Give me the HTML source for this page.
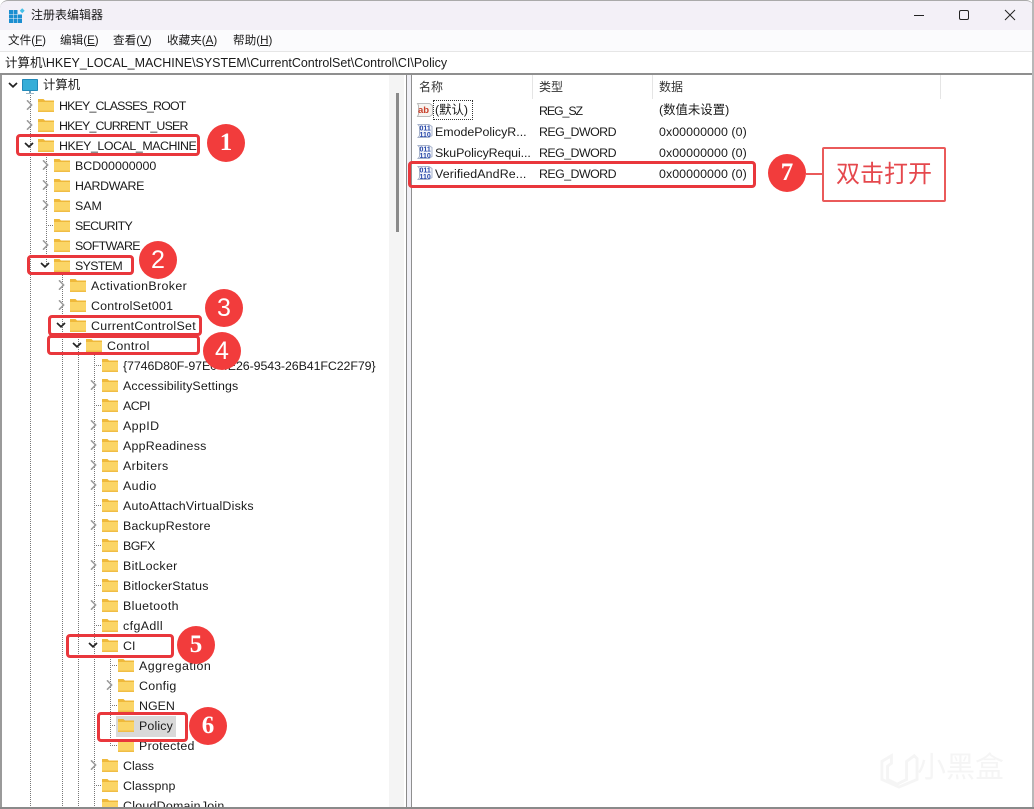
<!DOCTYPE html>
<html><head><meta charset="utf-8">
<style>
html,body{margin:0;padding:0;background:#fff}
#w{position:relative;width:1034px;height:809px;overflow:hidden;background:#fff;font-family:"Liberation Sans","Noto Sans CJK SC",sans-serif;font-size:12.4px;color:#1a1a1a}
#w div{position:absolute}
.t{white-space:nowrap;line-height:16px;height:16px;margin-top:1px}
.z{margin-top:0}
.m{margin-top:0;font-size:11.6px}
.l{background:repeating-linear-gradient(to bottom,#777 0 1px,transparent 1px 2px);width:1px}
.h{background:repeating-linear-gradient(to right,#777 0 1px,transparent 1px 2px);height:1px}
.b{border:3px solid #e9373c;border-radius:4px;box-sizing:border-box}
.c{width:38px;height:38px;border-radius:50%;background:#f23c3c;color:#fff;font:bold 25px/38px "Liberation Serif",serif;text-align:center}
.s{font:25px/38px "Liberation Sans",sans-serif}
svg{position:absolute;overflow:visible}
</style></head><body>
<div id="w">
<svg width="0" height="0" style="position:absolute"><defs>
<symbol id="f" viewBox="0 0 16 16"><path d="M0 2h5.5l1.5 1.5h9V15H0z" fill="#efb93a"/><path d="M0 5h16v10H0z" fill="#fbd566"/><path d="M0 13.5h16V15H0z" fill="#f0bd45"/></symbol>
<symbol id="o" viewBox="0 0 10 10"><path d="M3 .3l4.6 4.7L3 9.7" fill="none" stroke="#9c9c9c" stroke-width="1.6"/></symbol>
<symbol id="d" viewBox="0 0 10 10"><path d="M1 3l4 3.8L9 3" fill="none" stroke="#222" stroke-width="1.7"/></symbol>
<symbol id="n" viewBox="0 0 16 16"><path d="M1 1.5h11l3 2v9l-3 2H1l1.5-2v-9z" fill="#f4f6fb" stroke="#a9b4cc"/><text x="2.5" y="7.5" font-size="7" font-weight="bold" fill="#2747a8" font-family="Liberation Sans">011</text><text x="2.5" y="14" font-size="7" font-weight="bold" fill="#2747a8" font-family="Liberation Sans">110</text></symbol>
</defs></svg>

<!-- window chrome -->
<div style="left:0;top:0;width:1034px;height:30px;background:#f3f0f7;border-top:1px solid #aaa;box-sizing:border-box;border-radius:8px 8px 0 0"></div>
<div style="left:0;top:30px;width:1034px;height:21px;background:#fbfbfd"></div>
<div style="left:0;top:51px;width:1034px;height:1px;background:#e6e6e6"></div>
<div style="left:0;top:73px;width:1034px;height:2px;background:#8f8f8f"></div>
<div style="left:0;top:75px;width:2px;height:733px;background:#9a9a9a"></div>
<div style="left:1032px;top:0;width:2px;height:809px;background:#b8b8b8"></div>

<svg style="left:9px;top:8px" width="16" height="16" viewBox="0 0 16 16"><g fill="#1b8ed0"><rect x="0" y="2" width="4" height="4"/><rect x="4.5" y="2" width="4" height="4"/><rect x="0" y="6.5" width="4" height="4"/><rect x="4.5" y="6.5" width="4" height="4"/><rect x="9" y="6.5" width="4" height="4"/><rect x="0" y="11" width="4" height="4"/><rect x="4.5" y="11" width="4" height="4"/><rect x="9" y="11" width="4" height="4"/></g><rect x="11.5" y="1" width="3.5" height="3.5" fill="#45c0e8" transform="rotate(45 13.2 2.7)"/></svg>
<div class="t z" style="left:31px;top:7px;font-size:12px">注册表编辑器</div>

<svg style="left:912px;top:10px" width="110" height="12"><path d="M2 5.5h10" stroke="#222" stroke-width="1"/><rect x="47.5" y=".5" width="9" height="9" rx="1.5" fill="none" stroke="#222"/><path d="M93 0l10 10M103 0L93 10" stroke="#222"/></svg>

<div class="t m" style="left:8px;top:33px">文件(<u>F</u>)</div>
<div class="t m" style="left:60px;top:33px">编辑(<u>E</u>)</div>
<div class="t m" style="left:113px;top:33px">查看(<u>V</u>)</div>
<div class="t m" style="left:167px;top:33px">收藏夹(<u>A</u>)</div>
<div class="t m" style="left:233px;top:33px">帮助(<u>H</u>)</div>
<div class="t" style="left:5px;top:54px;font-size:12.47px">计算机\HKEY_LOCAL_MACHINE\SYSTEM\CurrentControlSet\Control\CI\Policy</div>

<!-- tree lines -->
<div class="l" style="left:30px;top:95px;height:712px"></div>
<div class="l" style="left:46px;top:155px;height:110px"></div>
<div class="l" style="left:62px;top:275px;height:532px"></div>
<div class="l" style="left:78px;top:335px;height:472px"></div>
<div class="l" style="left:94px;top:355px;height:452px"></div>
<div class="l" style="left:110px;top:655px;height:90px"></div>
<div class="h" style="left:94px;top:365px;width:8px"></div>
<div class="h" style="left:94px;top:405px;width:8px"></div>
<div class="h" style="left:94px;top:505px;width:8px"></div>
<div class="h" style="left:94px;top:545px;width:8px"></div>
<div class="h" style="left:94px;top:585px;width:8px"></div>
<div class="h" style="left:94px;top:625px;width:8px"></div>
<div class="h" style="left:94px;top:785px;width:8px"></div>
<div class="h" style="left:110px;top:665px;width:8px"></div>
<div class="h" style="left:110px;top:705px;width:8px"></div>
<div class="h" style="left:110px;top:725px;width:8px"></div>
<div class="h" style="left:110px;top:745px;width:8px"></div>
<div class="h" style="left:46px;top:225px;width:8px"></div>

<!-- computer row -->
<svg style="left:8px;top:80px" width="10" height="10"><use href="#d" width="10" height="10"/></svg>
<svg style="left:22px;top:79px" width="16" height="16" viewBox="0 0 16 16"><rect x="0" y="0" width="16" height="12" rx="1" fill="#35aed8"/><rect x=".4" y=".4" width="15.2" height="11.2" rx="1" fill="none" stroke="#1c7fb0" stroke-width=".8"/><rect x="7" y="12" width="2" height="2" fill="#6c9cb5"/><rect x="4" y="14" width="8" height="1" fill="#9cb8c8"/></svg>
<div class="t z" style="left:43px;top:77px">计算机</div>

<!-- tree rows -->
<svg style="left:24px;top:100px" width="10" height="10"><use href="#o" width="10" height="10"/></svg>
<svg style="left:38px;top:97px" width="16" height="16"><use href="#f" width="16" height="16"/></svg>
<div class="t" style="left:59px;top:97px;letter-spacing:-.82px">HKEY_CLASSES_ROOT</div>
<svg style="left:24px;top:120px" width="10" height="10"><use href="#o" width="10" height="10"/></svg>
<svg style="left:38px;top:117px" width="16" height="16"><use href="#f" width="16" height="16"/></svg>
<div class="t" style="left:59px;top:117px;letter-spacing:-.82px">HKEY_CURRENT_USER</div>
<svg style="left:24px;top:140px" width="10" height="10"><use href="#d" width="10" height="10"/></svg>
<svg style="left:38px;top:137px" width="16" height="16"><use href="#f" width="16" height="16"/></svg>
<div class="t" style="left:59px;top:137px;letter-spacing:-.44px">HKEY_LOCAL_MACHINE</div>

<svg style="left:40px;top:160px" width="10" height="10"><use href="#o" width="10" height="10"/></svg>
<svg style="left:54px;top:157px" width="16" height="16"><use href="#f" width="16" height="16"/></svg>
<div class="t" style="left:75px;top:157px">BCD00000000</div>
<svg style="left:40px;top:180px" width="10" height="10"><use href="#o" width="10" height="10"/></svg>
<svg style="left:54px;top:177px" width="16" height="16"><use href="#f" width="16" height="16"/></svg>
<div class="t" style="left:75px;top:177px;letter-spacing:-.35px">HARDWARE</div>
<svg style="left:40px;top:200px" width="10" height="10"><use href="#o" width="10" height="10"/></svg>
<svg style="left:54px;top:197px" width="16" height="16"><use href="#f" width="16" height="16"/></svg>
<div class="t" style="left:75px;top:197px">SAM</div>
<svg style="left:54px;top:217px" width="16" height="16"><use href="#f" width="16" height="16"/></svg>
<div class="t" style="left:75px;top:217px;letter-spacing:-.7px">SECURITY</div>
<svg style="left:40px;top:240px" width="10" height="10"><use href="#o" width="10" height="10"/></svg>
<svg style="left:54px;top:237px" width="16" height="16"><use href="#f" width="16" height="16"/></svg>
<div class="t" style="left:75px;top:237px;letter-spacing:-.6px">SOFTWARE</div>
<svg style="left:40px;top:260px" width="10" height="10"><use href="#d" width="10" height="10"/></svg>
<svg style="left:54px;top:257px" width="16" height="16"><use href="#f" width="16" height="16"/></svg>
<div class="t" style="left:75px;top:257px;letter-spacing:-.65px">SYSTEM</div>

<svg style="left:56px;top:280px" width="10" height="10"><use href="#o" width="10" height="10"/></svg>
<svg style="left:70px;top:277px" width="16" height="16"><use href="#f" width="16" height="16"/></svg>
<div class="t" style="left:91px;top:277px;letter-spacing:.37px">ActivationBroker</div>
<svg style="left:56px;top:300px" width="10" height="10"><use href="#o" width="10" height="10"/></svg>
<svg style="left:70px;top:297px" width="16" height="16"><use href="#f" width="16" height="16"/></svg>
<div class="t" style="left:91px;top:297px;letter-spacing:.23px">ControlSet001</div>
<svg style="left:56px;top:320px" width="10" height="10"><use href="#d" width="10" height="10"/></svg>
<svg style="left:70px;top:317px" width="16" height="16"><use href="#f" width="16" height="16"/></svg>
<div class="t" style="left:91px;top:317px;letter-spacing:.3px">CurrentControlSet</div>

<svg style="left:72px;top:340px" width="10" height="10"><use href="#d" width="10" height="10"/></svg>
<svg style="left:86px;top:337px" width="16" height="16"><use href="#f" width="16" height="16"/></svg>
<div class="t" style="left:107px;top:337px;letter-spacing:.4px">Control</div>

<svg style="left:102px;top:357px" width="16" height="16"><use href="#f" width="16" height="16"/></svg>
<div class="t" style="left:123px;top:357px;letter-spacing:-.08px">{7746D80F-97E0-4E26-9543-26B41FC22F79}</div>
<svg style="left:88px;top:380px" width="10" height="10"><use href="#o" width="10" height="10"/></svg>
<svg style="left:102px;top:377px" width="16" height="16"><use href="#f" width="16" height="16"/></svg>
<div class="t" style="left:123px;top:377px;letter-spacing:.15px">AccessibilitySettings</div>
<svg style="left:102px;top:397px" width="16" height="16"><use href="#f" width="16" height="16"/></svg>
<div class="t" style="left:123px;top:397px;letter-spacing:-.5px">ACPI</div>
<svg style="left:88px;top:420px" width="10" height="10"><use href="#o" width="10" height="10"/></svg>
<svg style="left:102px;top:417px" width="16" height="16"><use href="#f" width="16" height="16"/></svg>
<div class="t" style="left:123px;top:417px;letter-spacing:.4px">AppID</div>
<svg style="left:88px;top:440px" width="10" height="10"><use href="#o" width="10" height="10"/></svg>
<svg style="left:102px;top:437px" width="16" height="16"><use href="#f" width="16" height="16"/></svg>
<div class="t" style="left:123px;top:437px;letter-spacing:.25px">AppReadiness</div>
<svg style="left:88px;top:460px" width="10" height="10"><use href="#o" width="10" height="10"/></svg>
<svg style="left:102px;top:457px" width="16" height="16"><use href="#f" width="16" height="16"/></svg>
<div class="t" style="left:123px;top:457px;letter-spacing:.35px">Arbiters</div>
<svg style="left:88px;top:480px" width="10" height="10"><use href="#o" width="10" height="10"/></svg>
<svg style="left:102px;top:477px" width="16" height="16"><use href="#f" width="16" height="16"/></svg>
<div class="t" style="left:123px;top:477px;letter-spacing:.4px">Audio</div>
<svg style="left:102px;top:497px" width="16" height="16"><use href="#f" width="16" height="16"/></svg>
<div class="t" style="left:123px;top:497px;letter-spacing:.23px">AutoAttachVirtualDisks</div>
<svg style="left:88px;top:520px" width="10" height="10"><use href="#o" width="10" height="10"/></svg>
<svg style="left:102px;top:517px" width="16" height="16"><use href="#f" width="16" height="16"/></svg>
<div class="t" style="left:123px;top:517px;letter-spacing:.23px">BackupRestore</div>
<svg style="left:102px;top:537px" width="16" height="16"><use href="#f" width="16" height="16"/></svg>
<div class="t" style="left:123px;top:537px;letter-spacing:-.5px">BGFX</div>
<svg style="left:88px;top:560px" width="10" height="10"><use href="#o" width="10" height="10"/></svg>
<svg style="left:102px;top:557px" width="16" height="16"><use href="#f" width="16" height="16"/></svg>
<div class="t" style="left:123px;top:557px;letter-spacing:.33px">BitLocker</div>
<svg style="left:102px;top:577px" width="16" height="16"><use href="#f" width="16" height="16"/></svg>
<div class="t" style="left:123px;top:577px;letter-spacing:.2px">BitlockerStatus</div>
<svg style="left:88px;top:600px" width="10" height="10"><use href="#o" width="10" height="10"/></svg>
<svg style="left:102px;top:597px" width="16" height="16"><use href="#f" width="16" height="16"/></svg>
<div class="t" style="left:123px;top:597px;letter-spacing:.4px">Bluetooth</div>
<svg style="left:102px;top:617px" width="16" height="16"><use href="#f" width="16" height="16"/></svg>
<div class="t" style="left:123px;top:617px;letter-spacing:.4px">cfgAdll</div>
<svg style="left:88px;top:640px" width="10" height="10"><use href="#d" width="10" height="10"/></svg>
<svg style="left:102px;top:637px" width="16" height="16"><use href="#f" width="16" height="16"/></svg>
<div class="t" style="left:123px;top:637px">CI</div>

<svg style="left:118px;top:657px" width="16" height="16"><use href="#f" width="16" height="16"/></svg>
<div class="t" style="left:139px;top:657px;letter-spacing:.5px">Aggregation</div>
<svg style="left:104px;top:680px" width="10" height="10"><use href="#o" width="10" height="10"/></svg>
<svg style="left:118px;top:677px" width="16" height="16"><use href="#f" width="16" height="16"/></svg>
<div class="t" style="left:139px;top:677px;letter-spacing:.3px">Config</div>
<svg style="left:118px;top:697px" width="16" height="16"><use href="#f" width="16" height="16"/></svg>
<div class="t" style="left:139px;top:697px">NGEN</div>
<div style="left:116px;top:716px;width:60px;height:21px;background:#d9d9d9"></div>
<svg style="left:118px;top:717px" width="16" height="16"><use href="#f" width="16" height="16"/></svg>
<div class="t" style="left:139px;top:717px;letter-spacing:.15px">Policy</div>
<svg style="left:118px;top:737px" width="16" height="16"><use href="#f" width="16" height="16"/></svg>
<div class="t" style="left:139px;top:737px;letter-spacing:.3px">Protected</div>

<svg style="left:88px;top:760px" width="10" height="10"><use href="#o" width="10" height="10"/></svg>
<svg style="left:102px;top:757px" width="16" height="16"><use href="#f" width="16" height="16"/></svg>
<div class="t" style="left:123px;top:757px">Class</div>
<svg style="left:102px;top:777px" width="16" height="16"><use href="#f" width="16" height="16"/></svg>
<div class="t" style="left:123px;top:777px;letter-spacing:.1px">Classpnp</div>
<svg style="left:102px;top:797px" width="16" height="16"><use href="#f" width="16" height="16"/></svg>
<div class="t" style="left:123px;top:797px;letter-spacing:.25px">CloudDomainJoin</div>
<div style="left:0;top:807px;width:1034px;height:2px;background:#8a8a8a"></div>

<!-- scrollbar & splitter -->
<div style="left:389px;top:75px;width:15px;height:732px;background:#f4f4f4"></div>
<div style="left:396px;top:93px;width:3px;height:139px;background:#8a8a8a"></div>
<div style="left:406px;top:75px;width:1px;height:732px;background:#8a8a8a"></div>
<div style="left:407px;top:75px;width:4px;height:732px;background:#f0f0f6"></div>
<div style="left:411px;top:75px;width:1px;height:732px;background:#8f8f8f"></div>

<!-- list -->
<div class="t z" style="left:419px;top:79px;font-size:12px;color:#333">名称</div>
<div class="t z" style="left:539px;top:79px;font-size:12px;color:#333">类型</div>
<div class="t z" style="left:659px;top:79px;font-size:12px;color:#333">数据</div>
<div style="left:532px;top:75px;width:1px;height:24px;background:#e5e5e5"></div>
<div style="left:652px;top:75px;width:1px;height:24px;background:#e5e5e5"></div>
<div style="left:940px;top:75px;width:1px;height:24px;background:#e5e5e5"></div>

<svg style="left:417px;top:102px" width="16" height="16" viewBox="0 0 16 16"><path d="M.5 1.5h12l3 2v9l-3 2H.5l1-2v-9z" fill="#f6f3f0" stroke="#bbb"/><text x="1" y="11" font-size="9.5" font-weight="bold" fill="#c8402a" font-family="Liberation Sans">ab</text></svg>
<div style="left:433px;top:100px;width:40px;height:20px;border:1px dotted #333;box-sizing:border-box"></div>
<div class="t z" style="left:435px;top:102px">(默认)</div>
<div class="t" style="left:539px;top:102px;letter-spacing:-1.1px">REG_SZ</div>
<div class="t z" style="left:659px;top:102px">(数值未设置)</div>

<svg style="left:417px;top:123px" width="16" height="16"><use href="#n" width="16" height="16"/></svg>
<div class="t" style="left:435px;top:123px">EmodePolicyR...</div>
<div class="t" style="left:539px;top:123px;letter-spacing:-.55px">REG_DWORD</div>
<div class="t" style="left:659px;top:123px;letter-spacing:.07px">0x00000000 (0)</div>
<svg style="left:417px;top:144px" width="16" height="16"><use href="#n" width="16" height="16"/></svg>
<div class="t" style="left:435px;top:144px;letter-spacing:-.08px">SkuPolicyRequi...</div>
<div class="t" style="left:539px;top:144px;letter-spacing:-.55px">REG_DWORD</div>
<div class="t" style="left:659px;top:144px;letter-spacing:.07px">0x00000000 (0)</div>
<svg style="left:417px;top:165px" width="16" height="16"><use href="#n" width="16" height="16"/></svg>
<div class="t" style="left:435px;top:165px;letter-spacing:.12px">VerifiedAndRe...</div>
<div class="t" style="left:539px;top:165px;letter-spacing:-.55px">REG_DWORD</div>
<div class="t" style="left:659px;top:165px;letter-spacing:.07px">0x00000000 (0)</div>

<!-- annotations -->
<div class="b" style="left:16px;top:134px;width:184px;height:22px"></div>
<div class="b" style="left:27px;top:255px;width:107px;height:20px"></div>
<div class="b" style="left:48px;top:315px;width:154px;height:21px"></div>
<div class="b" style="left:47px;top:335px;width:153px;height:20px"></div>
<div class="b" style="left:66px;top:634px;width:108px;height:24px"></div>
<div class="b" style="left:97px;top:712px;width:91px;height:30px"></div>
<div class="b" style="left:408px;top:161px;width:348px;height:27px"></div>
<div class="c" style="left:207px;top:124px">1</div>
<div class="c s" style="left:139px;top:241px">2</div>
<div class="c s" style="left:205px;top:289px">3</div>
<div class="c s" style="left:203px;top:332px">4</div>
<div class="c" style="left:177px;top:626px">5</div>
<div class="c" style="left:189px;top:707px">6</div>
<div class="c" style="left:768px;top:154px">7</div>
<div style="left:806px;top:173px;width:17px;height:2px;background:#ea5a5a"></div>
<div style="left:822px;top:147px;width:124px;height:55px;box-sizing:border-box;border:2px solid #ea5a5a;border-radius:2px;background:#fff;color:#e5484d;font-size:24px;line-height:51px;text-align:center">双击打开</div>

<!-- watermark -->
<svg style="left:878px;top:750px" width="42" height="38" viewBox="0 0 42 40"><path d="M3 12l10-6v8l-4 3v14l10 5 10-5V12l8-6 3 3v22L21 39 3 31z" fill="none" stroke="#f5f5f5" stroke-width="3"/></svg>
<div class="t z" style="left:917px;top:750px;height:36px;line-height:36px;font-size:29px;color:#f5f5f5">小黑盒</div>
</div>
</body></html>
